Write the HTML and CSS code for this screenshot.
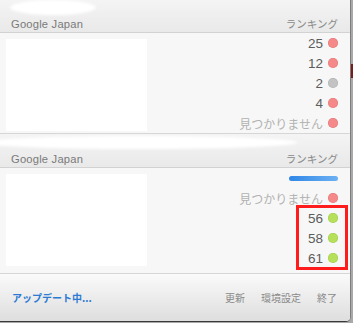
FILE: index.html
```html
<!DOCTYPE html>
<html lang="ja">
<head>
<meta charset="utf-8">
<link rel="stylesheet" href="styles.css">
</head>
<body>
<div class="desk-strip"></div>
<div class="window">
  <div class="header">
    <div class="blob blob-top"></div>
    <span class="site">Google Japan</span>
    <span class="rank-label">ランキング</span>
  </div>
  <div class="rows">
    <div class="redact"></div>
    <div class="row"><span class="num">25</span><span class="dot red"></span></div>
    <div class="row"><span class="num">12</span><span class="dot red"></span></div>
    <div class="row"><span class="num">2</span><span class="dot gray"></span></div>
    <div class="row"><span class="num">4</span><span class="dot red"></span></div>
    <div class="row"><span class="none">見つかりません</span><span class="dot red"></span></div>
  </div>
  <div class="header header2">
    <div class="blob blob-mid"></div>
    <span class="site">Google Japan</span>
    <span class="rank-label">ランキング</span>
  </div>
  <div class="rows rows2">
    <div class="redact"></div>
    <div class="row"><span class="progress"></span></div>
    <div class="row"><span class="none">見つかりません</span><span class="dot red"></span></div>
    <div class="row"><span class="num">56</span><span class="dot green"></span></div>
    <div class="row"><span class="num">58</span><span class="dot green"></span></div>
    <div class="row"><span class="num">61</span><span class="dot green"></span></div>
    <div class="highlight"></div>
  </div>
  <div class="footer">
    <span class="status">アップデート中...</span>
    <div class="actions">
      <span>更新</span>
      <span>環境設定</span>
      <span>終了</span>
    </div>
  </div>
</div>
</body>
</html>
```

FILE: styles.css
```css
html, body {
  margin: 0;
  padding: 0;
}
body {
  width: 353px;
  height: 323px;
  background: #a9a9a9;
  position: relative;
  overflow: hidden;
  font-family: "Liberation Sans", "Noto Sans CJK JP", sans-serif;
}
.desk-strip {
  position: absolute;
  left: 351px;
  top: 64px;
  width: 2px;
  height: 14px;
  background: #7a1c1c;
}
.window {
  position: relative;
  width: 350px;
  height: 321px;
  background: #f6f6f6;
  border-right: 1px solid #7d7d7d;
  border-bottom: 1px solid #3a3a3a;
  border-bottom-right-radius: 5px;
  overflow: hidden;
  display: flex;
  flex-direction: column;
}
.header {
  position: relative;
  height: 33px;
  flex: none;
  box-sizing: border-box;
  display: flex;
  justify-content: space-between;
  align-items: flex-end;
  padding: 0 12px 1px 11px;
  background: linear-gradient(#f4f4f4, #e9e9e9);
  border-bottom: 1px solid #d2d2d2;
}
.header2 {
  height: 34px;
}
.site {
  position: relative;
  font-size: 11.2px;
  letter-spacing: 0.2px;
  line-height: 14px;
  color: #7a7a7a;
}
.rank-label {
  position: relative;
  font-family: "Noto Sans CJK JP", sans-serif;
  font-size: 10.5px;
  line-height: 14px;
  color: #8a8a8a;
}
.blob {
  position: absolute;
  background: #fff;
  border-radius: 50%;
  filter: blur(1.5px);
}
.blob-top {
  left: 10px;
  top: 0;
  width: 86px;
  height: 15px;
}
.blob-mid {
  left: -20px;
  top: 2px;
  width: 318px;
  height: 13px;
}
.rows {
  position: relative;
  flex: none;
  background: #f7f7f7;
  border-bottom: 1px solid #d6d6d6;
}
.rows2 {
  padding-bottom: 5px;
}
.redact {
  position: absolute;
  left: 6px;
  top: 6px;
  width: 141px;
  height: 92px;
  background: #fff;
}
.row {
  height: 20px;
  display: flex;
  justify-content: flex-end;
  align-items: center;
  gap: 5px;
  padding-right: 12px;
}
.num {
  font-size: 13.5px;
  color: #5c5c5c;
}
.none {
  font-family: "Noto Sans CJK JP", sans-serif;
  font-size: 12px;
  color: #b2b2b2;
}
.dot {
  width: 10px;
  height: 10px;
  border-radius: 50%;
  flex: none;
}
.red {
  background: #f5898a;
  box-shadow: inset 0 0 0 0.5px rgba(190, 70, 70, 0.35);
}
.gray {
  background: #c3c3c3;
  box-shadow: inset 0 0 0 0.5px rgba(0, 0, 0, 0.12);
}
.green {
  background: #b6e05a;
  box-shadow: inset 0 0 0 0.5px rgba(110, 160, 30, 0.35);
}
.progress {
  width: 49px;
  height: 5px;
  border-radius: 3px;
  background: linear-gradient(90deg, #2f87e6, #6db0f4);
}
.highlight {
  position: absolute;
  left: 296px;
  top: 37px;
  width: 52px;
  height: 65px;
  box-sizing: border-box;
  border: 3px solid #ff1c1c;
}
.footer {
  flex: 1;
  display: flex;
  justify-content: space-between;
  align-items: center;
  padding: 0 13px 0 12px;
  background: linear-gradient(#fafafa, #dedede);
  font-family: "Noto Sans CJK JP", sans-serif;
}
.status {
  font-size: 10px;
  font-weight: bold;
  color: #2b7ad3;
}
.actions {
  display: flex;
  gap: 16px;
  font-size: 10px;
  color: #8a8a8a;
}
```
